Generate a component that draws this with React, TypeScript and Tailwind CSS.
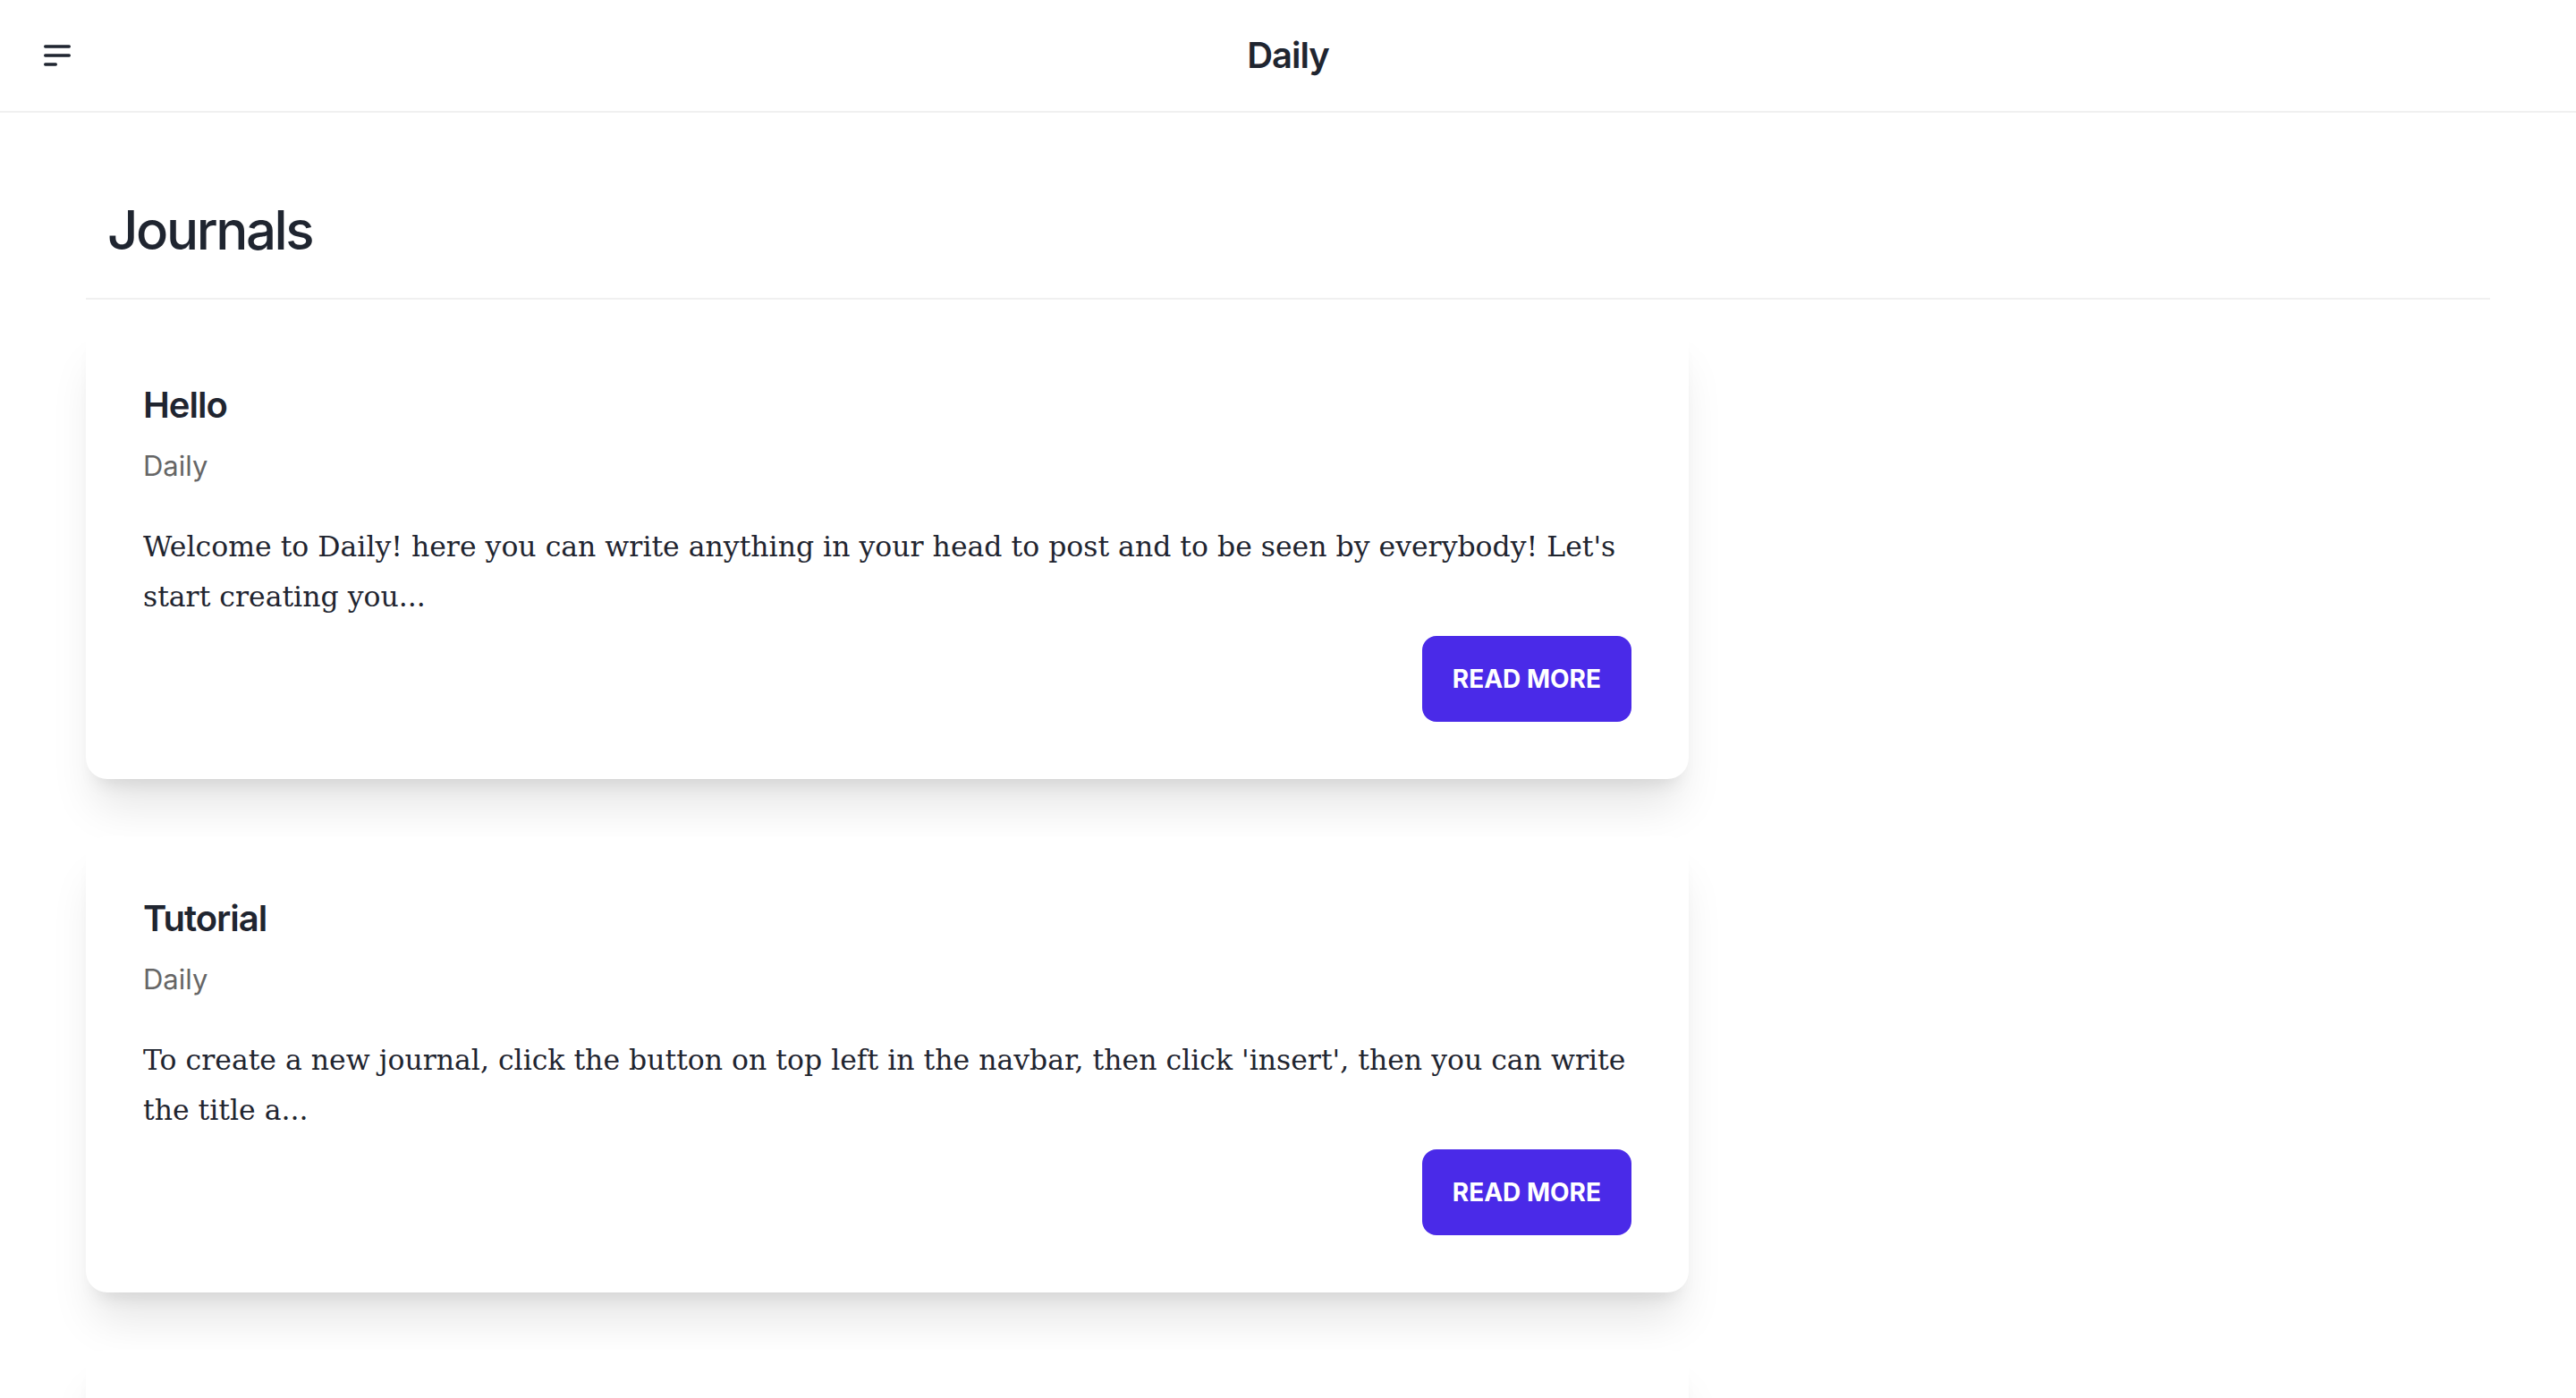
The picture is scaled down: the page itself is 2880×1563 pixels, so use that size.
import React from "react";

const journals = [
  {
    title: "Hello",
    author: "Daily",
    body: "Welcome to Daily! here you can write anything in your head to post and to be seen by everybody! Let's start creating you...",
  },
  {
    title: "Tutorial",
    author: "Daily",
    body: "To create a new journal, click the button on top left in the navbar, then click 'insert', then you can write the title a...",
  },
  {
    title: "My First Journal",
    author: "Daily",
    body: "Today I started writing my journal here on Daily. It feels nice to put my thoughts into words and share them with...",
  },
];

function MenuIcon() {
  return (
    <svg viewBox="0 0 24 24" fill="none" stroke="currentColor" strokeWidth={2} strokeLinecap="round" strokeLinejoin="round" className="h-10 w-10">
      <path d="M4 6h16M4 12h16M4 18h7" />
    </svg>
  );
}

export default function App() {
  return (
    <div className="min-h-screen bg-white text-[#1f2530]" style={{ fontFamily: "Inter, 'Noto Sans', sans-serif" }}>
      <nav className="relative flex h-[126px] items-center border-b-2 border-[#f0f0f0] px-[44px]">
        <button className="text-[#1f2530]">
          <MenuIcon />
        </button>
        <div className="absolute left-1/2 -translate-x-1/2 text-[40px] leading-[56px] font-semibold tracking-tight">Daily</div>
      </nav>
      <main className="px-24 pt-[95px]">
        <div className="border-b-2 border-[#f0f0f0] px-6 pb-10">
          <h1 className="text-[60px] leading-[72px] font-medium tracking-[-0.04em]">Journals</h1>
        </div>
        <div className="mt-[26px] flex max-w-[1792px] flex-col gap-16">
          {journals.map((j) => (
            <div
              key={j.title}
              className="rounded-[24px] bg-white p-16 shadow-[0_40px_50px_-10px_rgba(0,0,0,0.1),0_16px_20px_-12px_rgba(0,0,0,0.1)]"
            >
              <h2 className="text-[40px] leading-[56px] font-semibold tracking-tight">{j.title}</h2>
              <div className="mt-4 text-[31px] leading-[48px] text-[#666666]">{j.author}</div>
              <p
                className="mt-[38px] text-[31.5px] leading-[56px] text-[#1f2530]"
                style={{ fontFamily: "'DejaVu Serif', serif" }}
              >
                {j.body}
              </p>
              <div className="mt-4 flex justify-end">
                <button className="flex h-24 items-center rounded-2xl bg-[#4a2ae8] px-[34px] text-[28px] font-bold text-white">
                  READ MORE
                </button>
              </div>
            </div>
          ))}
        </div>
      </main>
    </div>
  );
}
